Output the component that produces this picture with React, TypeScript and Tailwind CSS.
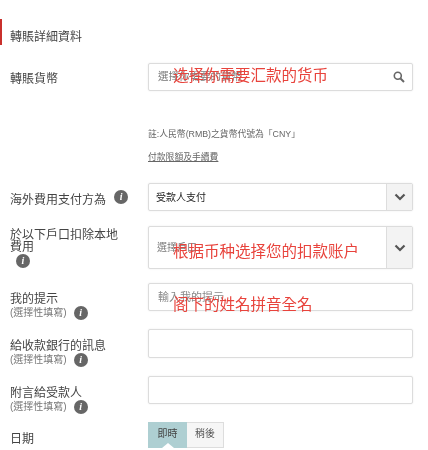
const cjk = "font-['Liberation_Sans','Noto_Sans_CJK_TC',sans-serif]";

function Info({ className = "" }: { className?: string }) {
  return (
    <span className={`flex h-[14px] w-[14px] shrink-0 items-center justify-center rounded-full bg-[#666666] font-['Liberation_Serif',serif] text-[10px] font-bold italic leading-none text-white ${className}`}>
      i
    </span>
  );
}

function Chevron() {
  return (
    <span className="flex w-[26px] shrink-0 items-center justify-center self-stretch border-l border-[#dddddd] bg-[#f3f3f3]">
      <svg width="12" height="8" viewBox="0 0 12 8" fill="none">
        <path d="M1.5 1.5 6 6l4.5-4.5" stroke="#555555" strokeWidth="2.2" />
      </svg>
    </span>
  );
}

function Overlay({ children, className }: { children: string; className: string }) {
  return (
    <span className={`absolute left-[24px] whitespace-nowrap text-[15.5px] leading-none text-[#e8433c] ${className}`}>
      {children}
    </span>
  );
}

const box = "relative flex w-[265px] items-center rounded-[2px] border border-[#dcdcdc] bg-white shadow-[0_0_2px_rgba(0,0,0,0.08)]";

function Optional({ children }: { children: string }) {
  return (
    <div className="flex flex-col">
      <span className="text-[12px] leading-[13px] text-[#444444]">{children}</span>
      <span className="flex items-center gap-[7px] text-[10px] leading-[14px] text-[#777777]">
        (選擇性填寫)
        <Info />
      </span>
    </div>
  );
}

export default function App() {
  return (
    <div className={`h-[450px] w-[428px] overflow-hidden bg-white blur-[0.5px] ${cjk}`}>
      <div className="mt-[19px] flex h-[26px] items-center border-l-[2px] border-[#c9302c] pl-[8px] pt-[9px] text-[12px] text-[#444444]">
        轉賬詳細資料
      </div>

      <div className="mt-[18px] flex h-[28px]">
        <div className="w-[148px] pl-[10px] pt-[9px] text-[12px] leading-[14px] text-[#444444]">轉賬貨幣</div>
        <div className={`${box} h-[28px] pl-[9px]`}>
          <span className="text-[10.5px] text-[#777777]">選擇你需要的貨幣</span>
          <Overlay className="top-[4px]">选择你需要汇款的货币</Overlay>
          <svg className="absolute right-[7px]" width="12" height="12" viewBox="0 0 12 12" fill="none">
            <circle cx="4.8" cy="4.8" r="3.5" stroke="#666666" strokeWidth="1.6" />
            <path d="M7.5 7.5 11 11" stroke="#666666" strokeWidth="2" />
          </svg>
        </div>
      </div>

      <div className="ml-[148px] mt-[37px] text-[8.8px] leading-[12px] text-[#666666]">註:人民幣(RMB)之貨幣代號為「CNY」</div>
      <div className="ml-[148px] mt-[11px] text-[8.8px] leading-[12px] text-[#666666] underline">付款限額及手續費</div>

      <div className="mt-[20px] flex h-[28px]">
        <div className="flex w-[148px] items-center gap-[8px] pl-[10px] text-[12px] text-[#444444]">
          <span className="pt-[5px]">海外費用支付方為</span>
          <Info />
        </div>
        <div className={`${box} h-[28px] pl-[7px]`}>
          <span className="flex-1 text-[10px] text-[#222222]">受款人支付</span>
          <Chevron />
        </div>
      </div>

      <div className="mt-[15px] flex h-[43px]">
        <div className="w-[148px] pl-[10px] pr-[24px] pt-[3px] text-[12px] leading-[12px] text-[#444444]">
          於以下戶口扣除本地費用
          <Info className="ml-[6px] mt-[1px]" />
        </div>
        <div className={`${box} h-[43px] pl-[8px]`}>
          <span className="flex-1 text-[10px] text-[#777777]">選擇戶口</span>
          <Overlay className="top-[17px]">根据币种选择您的扣款账户</Overlay>
          <Chevron />
        </div>
      </div>

      <div className="mt-[14px] flex h-[28px]">
        <div className="w-[148px] pl-[10px] pt-[10px]">
          <Optional>我的提示</Optional>
        </div>
        <div className={`${box} h-[28px] pl-[9px]`}>
          <span className="text-[11px] text-[#888888]">輸入我的提示</span>
          <Overlay className="top-[13px]">阁下的姓名拼音全名</Overlay>
        </div>
      </div>

      <div className="mt-[18px] flex h-[29px]">
        <div className="w-[148px] pl-[10px] pt-[11px]">
          <Optional>給收款銀行的訊息</Optional>
        </div>
        <div className={`${box} h-[29px]`} />
      </div>

      <div className="mt-[18px] flex h-[28px]">
        <div className="w-[148px] pl-[10px] pt-[11px]">
          <Optional>附言給受款人</Optional>
        </div>
        <div className={`${box} h-[28px]`} />
      </div>

      <div className="mt-[18px] flex h-[26px]">
        <div className="w-[148px] pl-[10px] pt-[10px] text-[12px] leading-[14px] text-[#444444]">日期</div>
        <div className="flex h-[26px] w-[76px] text-[10px]">
          <span className="relative flex w-[39px] items-center justify-center bg-[#aecfd2] pb-[3px] text-[#444444]">
            即時
            <span className="absolute bottom-0 left-[14px] h-0 w-0 border-x-[6px] border-b-[5px] border-x-transparent border-b-white" />
          </span>
          <span className="flex flex-1 items-center justify-center border border-l-0 border-[#dddddd] bg-[#f6f6f6] pb-[3px] text-[#555555]">稍後</span>
        </div>
      </div>
    </div>
  );
}
